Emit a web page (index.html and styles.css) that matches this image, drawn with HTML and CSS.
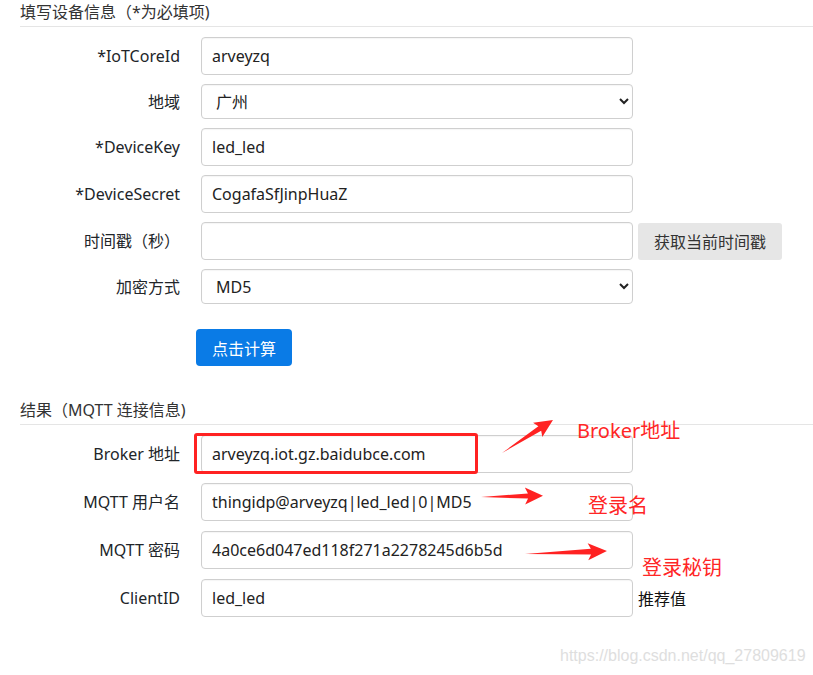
FILE: index.html
```html
<!DOCTYPE html>
<html lang="zh-CN">
<head>
<meta charset="utf-8">
<title>设备信息</title>
<link rel="stylesheet" href="styles.css">
</head>
<body>
<div class="page">
  <section class="sec">
    <h3 class="sec-title">填写设备信息（*为必填项)</h3>
    <div class="form">
      <div class="row"><label class="lbl">*IoTCoreId</label><input class="ctl" type="text" value="arveyzq"></div>
      <div class="row"><label class="lbl">地域</label><select class="ctl sel"><option>广州</option></select></div>
      <div class="row"><label class="lbl">*DeviceKey</label><input class="ctl" type="text" value="led_led"></div>
      <div class="row"><label class="lbl">*DeviceSecret</label><input class="ctl" type="text" value="CogafaSfJinpHuaZ"></div>
      <div class="row"><label class="lbl">时间戳（秒）</label><input class="ctl" type="text" value=""><button class="btn-gray" type="button">获取当前时间戳</button></div>
      <div class="row"><label class="lbl">加密方式</label><select class="ctl sel"><option>MD5</option></select></div>
    </div>
    <button class="btn-primary" type="button">点击计算</button>
  </section>

  <section class="sec sec2">
    <h3 class="sec-title">结果（MQTT 连接信息)</h3>
    <div class="form form2">
      <div class="row"><label class="lbl">Broker 地址</label><input class="ctl" type="text" value="arveyzq.iot.gz.baidubce.com"></div>
      <div class="row"><label class="lbl">MQTT 用户名</label><input class="ctl" type="text" value="thingidp@arveyzq|led_led|0|MD5"></div>
      <div class="row"><label class="lbl">MQTT 密码</label><input class="ctl" type="text" value="4a0ce6d047ed118f271a2278245d6b5d"></div>
      <div class="row"><label class="lbl">ClientID</label><input class="ctl" type="text" value="led_led"><span class="hint">推荐值</span></div>
    </div>
  </section>

  <div class="mark-box"></div>
  <svg class="arrows" width="813" height="675" viewBox="0 0 813 675" aria-hidden="true">
    <g transform="translate(502 453) rotate(-32.9)">
      <polygon points="0,0 45,-2.6 42.5,-8.5 60.7,0 42.5,8.5 45,2.6" fill="#ff2222"/>
    </g>
    <g transform="translate(481 497) rotate(-1.2)">
      <polygon points="0,0 47,-2.6 44,-8.5 62,0 44,8.5 47,2.6" fill="#ff2222"/>
    </g>
    <g transform="translate(525 554) rotate(-2.1)">
      <polygon points="0,0 66,-2.8 63,-8.5 82,0 63,8.5 66,2.8" fill="#ff2222"/>
    </g>
  </svg>
  <div class="note note1">Broker地址</div>
  <div class="note note2">登录名</div>
  <div class="note note3">登录秘钥</div>
  <div class="watermark">https://blog.csdn.net/qq_27809619</div>
</div>
</body>
</html>
```
FILE: styles.css
```css
html, body {
  margin: 0;
  padding: 0;
  background: #ffffff;
}
body {
  font-family: "Noto Sans", "Noto Sans CJK SC", sans-serif;
  font-size: 16px;
  color: #212529;
}
.page {
  position: relative;
  width: 813px;
  height: 675px;
  overflow: hidden;
}
.sec {
  margin-left: 20px;
}
.sec2 {
  margin-top: 32px;
}
.sec-title {
  margin: 0;
  padding: 1px 0 3px 0;
  font-size: 16px;
  font-weight: normal;
  line-height: 22px;
  color: #333333;
  border-bottom: 1px solid #e5e5e5;
}
.form {
  margin-top: 10px;
  display: flex;
  flex-direction: column;
  gap: 9px;
}
.form2 {
  gap: 10px;
}
.row {
  display: flex;
  align-items: center;
}
.lbl {
  width: 160px;
  margin-right: 21px;
  text-align: right;
  line-height: 22px;
  color: #212529;
}
.ctl {
  box-sizing: border-box;
  width: 432px;
  height: 38px;
  margin: 0;
  padding: 0 10px;
  border: 1px solid #cfcfcf;
  border-radius: 4px;
  background: #ffffff;
  font-family: "Noto Sans", "Noto Sans CJK SC", sans-serif;
  font-size: 16px;
  color: #222222;
  box-shadow: inset 0 1px 1px rgba(0, 0, 0, 0.04);
}
.sel {
  height: 35px;
  padding: 0 6px 0 10px;
}
.btn-gray {
  margin-left: 5px;
  height: 37px;
  width: 144px;
  padding: 0;
  border: none;
  border-radius: 3px;
  background: #e6e6e6;
  color: #333333;
  font-family: "Noto Sans CJK SC", sans-serif;
  font-size: 16px;
}
.btn-primary {
  margin: 25px 0 0 176px;
  width: 96px;
  height: 37px;
  padding: 0;
  border: none;
  border-radius: 4px;
  background: #0a7be6;
  color: #ffffff;
  font-family: "Noto Sans CJK SC", sans-serif;
  font-size: 16px;
}
.hint {
  margin-left: 5px;
  color: #111111;
  font-family: "Noto Sans CJK SC", sans-serif;
  font-size: 16px;
}
.mark-box {
  position: absolute;
  left: 194px;
  top: 433px;
  width: 278px;
  height: 35px;
  border: 3px solid #ff2222;
  border-radius: 3px;
}
.arrows {
  position: absolute;
  left: 0;
  top: 0;
}
.note {
  position: absolute;
  color: #ff2626;
  font-family: "Noto Sans", "Noto Sans CJK SC", sans-serif;
  font-size: 20px;
  line-height: 24px;
  white-space: nowrap;
}
.note1 { left: 577px; top: 419px; }
.note2 { left: 588px; top: 494px; }
.note3 { left: 642px; top: 556px; }
.watermark {
  position: absolute;
  left: 560px;
  top: 647px;
  font-family: "Liberation Sans", sans-serif;
  font-size: 16px;
  line-height: 18px;
  color: #dedede;
  white-space: nowrap;
}
```
